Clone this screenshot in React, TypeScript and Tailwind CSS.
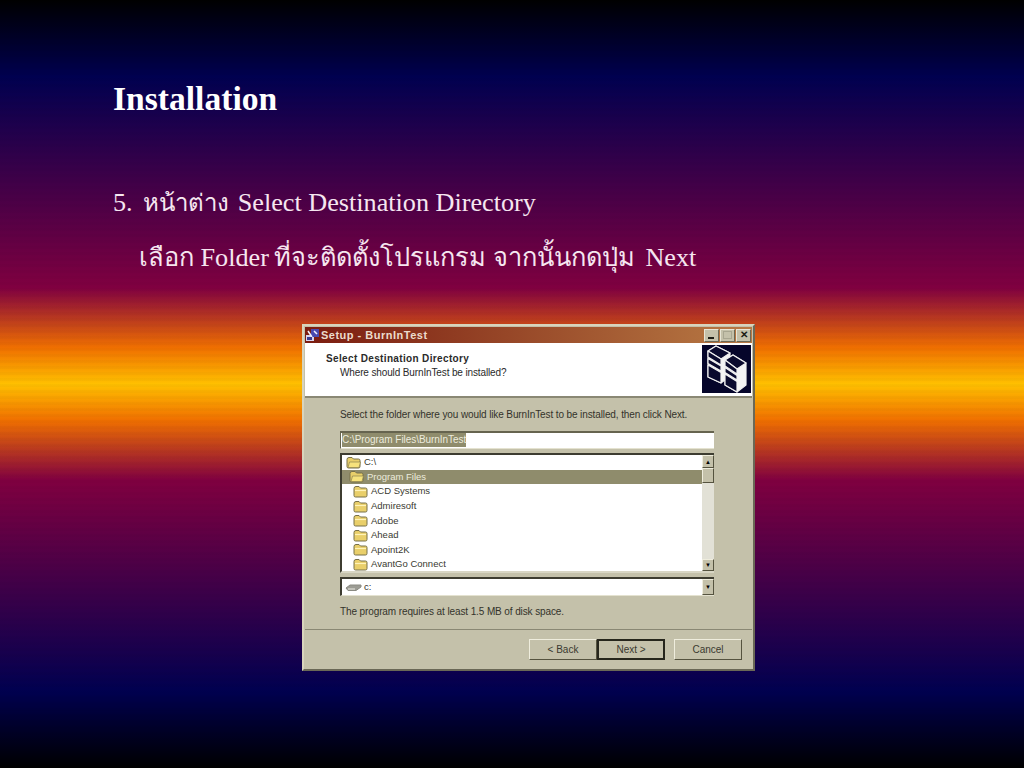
import React from "react";

const FolderIcon = ({ open }: { open?: boolean }) => (
  <svg width="15" height="13" viewBox="0 0 15 13" className="shrink-0">
    <path d="M1 3.500 Q1 1.500 3 1.500 H6 L7.500 3 H12.500 Q14 3 14 4.500 V10.500 Q14 12 12.500 12 H2.500 Q1 12 1 10.500 Z" fill="#e9cf6a" stroke="#77704a" strokeWidth="1" />
    {open ? (
      <path d="M2 11.500 L3.500 6 H14.500 L13 11.500 Z" fill="#f6e27c" stroke="#8a8150" strokeWidth="0.700" />
    ) : (
      <path d="M2 5.500 H13" stroke="#fff3b8" strokeWidth="1.200" />
    )}
  </svg>
);

const ServerIcon = () => (
  <svg width="49" height="48" viewBox="0 0 49 48" className="block">
    <rect width="49" height="48" fill="#05052a" />
    <g stroke="#f0f0f0" strokeWidth="1.200" strokeLinejoin="round" fill="#0a0a2e">
      <path d="M6 6 L14 1 L28 8 L28 31 L19 38 L6 32 Z" fill="#f4f4f4" />
      <path d="M6 6 L14 1 L28 8 L19 14 Z" />
      <path d="M6 6 L19 14 V20 L6 12 Z" />
      <path d="M6 13.500 L19 21 V26 L6 18.500 Z" />
      <path d="M6 20 L19 27.500 V38 L6 32 Z" />
      <path d="M23 15 L31 10 L44 18 L44 40 L35 47 L23 40 Z" fill="#f4f4f4" />
      <path d="M23 15 L31 10 L44 18 L35 24 Z" />
      <path d="M23 15 L35 24 V29 L23 21 Z" />
      <path d="M23 22.500 L35 30.500 V35 L23 27.500 Z" />
      <path d="M23 29 L35 36.500 V47 L23 40 Z" />
    </g>
  </svg>
);

const DriveIcon = () => (
  <svg width="17" height="9" viewBox="0 0 17 9" className="shrink-0">
    <path d="M1 5 L5 2 H16 V4 L11 7.500 H3 Z" fill="#9c9c94" stroke="#8a8a82" strokeWidth="1" />
    <path d="M3 6 H10" stroke="#ecece4" strokeWidth="1" />
  </svg>
);

const WinButton = ({ children }: { children: React.ReactNode }) => (
  <div className="flex items-center justify-center h-[13px] w-[15px] bg-[#c4c1aa] border border-t-[#e8e6d6] border-l-[#e8e6d6] border-r-[#6a6856] border-b-[#6a6856]">
    {children}
  </div>
);

const Button = ({ label, primary }: { label: string; primary?: boolean }) => (
  <div
    className={`flex items-center justify-center w-[68px] h-[21px] bg-[#c4c1aa] text-[10px] text-[#3a3a30] ${
      primary
        ? "border-2 border-[#26261c]"
        : "border border-t-[#efeddd] border-l-[#efeddd] border-r-[#55533f] border-b-[#55533f]"
    }`}
  >
    {label}
  </div>
);

const folders = ["ACD Systems", "Admiresoft", "Adobe", "Ahead", "Apoint2K", "AvantGo Connect"];

const TreeRow = ({ label, indent, open, selected }: { label: string; indent: string; open?: boolean; selected?: boolean }) => (
  <div className={`flex items-center gap-[3px] h-[14.600px] text-[9.500px] ${indent} ${selected ? "bg-[#8f8c6c] text-[#ecebdc]" : "text-[#3a3a30]"}`}>
    <FolderIcon open={open} />
    <span>{label}</span>
  </div>
);

export default function App() {
  return (
    <div
      className="w-[1024px] h-[768px] overflow-hidden text-white bg-[repeating-linear-gradient(180deg,rgba(0,0,0,0.02)_0px,rgba(0,0,0,0.02)_3px,transparent_3px,transparent_6px),linear-gradient(180deg,#000000_0px,#000050_77px,#800040_288px,#f07000_348px,#ffc000_384px,#f07000_420px,#800040_480px,#000050_691px,#000000_768px)]"
      style={{ fontFamily: '"Liberation Serif", "Noto Sans", serif' }}
    >
      <div className="pl-[113px] pt-[80px]">
        <h1 className="text-[33.600px] leading-[38px] font-bold">Installation</h1>
        <p className="mt-[65px] text-[26.200px] leading-[40px] text-[#f6e6f0]">
          5. <span className="ml-[4px] mr-[2px] text-[24px]">หน้าต่าง</span> Select Destination Directory
        </p>
        <p className="mt-[14px] ml-[26px] text-[26.200px] leading-[40px] text-[#f6e6f0]">
          <span className="text-[25.400px]">เลือก</span> Folder <span className="-ml-[1px] mr-[4px] text-[25.400px]">ที่จะติดตั้งโปรแกรม จากนั้นกดปุ่ม</span> Next
        </p>
      </div>

      <div
        className="ml-[302px] mt-[46px] w-[453px] h-[347px] flex flex-col border-[2px] border-t-[#d8d4bc] border-l-[#d8d4bc] border-r-[#6a6856] border-b-[#6a6856] bg-[#c4c1aa] p-px text-[10px]"
        style={{ fontFamily: '"Liberation Sans", Arial, sans-serif' }}
      >
        <div className="flex items-center justify-between h-[16px] pr-[1px] bg-[linear-gradient(90deg,#7b1c10,#b87a44)]">
          <div className="flex items-center gap-[1px]">
            <svg width="15" height="14" viewBox="0 0 15 14">
              <rect x="1" y="7" width="8" height="6" fill="#d8d4ee" />
              <rect x="6" y="1" width="8" height="8" fill="#4a4ab0" />
              <path d="M3 3 L7 9 M9 3 L12 6" stroke="#f4f4ff" strokeWidth="1.500" />
              <rect x="2" y="9" width="5" height="3" fill="#3a3a90" />
            </svg>
            <span className="text-[11px] leading-none font-bold tracking-[0.500px] text-[#ecdccc]">Setup - BurnInTest</span>
          </div>
          <div className="flex items-center gap-[1px]">
            <WinButton>
              <div className="w-[6px] h-[2px] bg-[#1c1c14] mt-[6px] mr-[2px]" />
            </WinButton>
            <WinButton>
              <div className="w-[9px] h-[8px] border border-[#a8a690]" />
            </WinButton>
            <WinButton>
              <span className="text-[10px] leading-none font-bold text-[#1c1c14]">✕</span>
            </WinButton>
          </div>
        </div>

        <div className="flex justify-between h-[55px] bg-white border-b-2 border-b-[#8a8874] pr-[1px] pt-[2px]">
          <div className="pl-[21px] pt-[7px] text-[#2a2a2a]">
            <div className="font-bold leading-[14px] tracking-[0.350px]">Select Destination Directory</div>
            <div className="pl-[14px] leading-[14px] tracking-[-0.130px]">Where should BurnInTest be installed?</div>
          </div>
          <ServerIcon />
        </div>

        <div className="flex flex-col flex-1 pl-[35px] pr-[38px] text-[#33332a]">
          <div className="mt-[10px] leading-[14px] tracking-[-0.110px]">Select the folder where you would like BurnInTest to be installed, then click Next.</div>

          <div className="mt-[9px] h-[18px] bg-white border-t-2 border-l border-t-[#66644f] border-l-[#66644f] border-b border-b-[#e4e2d0] pl-[1px]">
            <span className="block w-fit h-[14px] leading-[13px] bg-[#8f8c6c] text-[#ecebdc] tracking-[-0.050px]">C:\Program Files\BurnInTest</span>
          </div>

          <div className="mt-[4px] h-[120px] flex bg-white border-t-2 border-l-2 border-t-[#3d3c30] border-l-[#3d3c30] border-b-2 border-b-[#d8d6c4]">
            <div className="flex-1 min-w-0">
              <TreeRow label="C:\" indent="pl-[4px]" open />
              <TreeRow label="Program Files" indent="pl-[7px]" open selected />
              {folders.map((name) => (
                <TreeRow key={name} label={name} indent="pl-[11px]" />
              ))}
            </div>
            <div className="w-[12px] flex flex-col justify-between bg-[#e2e1d6]">
              <div>
                <div className="flex items-center justify-center h-[13px] bg-[#c4c1aa] border border-t-[#efeddd] border-l-[#efeddd] border-r-[#55533f] border-b-[#55533f] text-[6px] leading-none text-black">▲</div>
                <div className="h-[15px] bg-[#c4c1aa] border border-t-[#efeddd] border-l-[#efeddd] border-r-[#55533f] border-b-[#55533f]" />
              </div>
              <div className="flex items-center justify-center h-[12px] bg-[#c4c1aa] border border-t-[#efeddd] border-l-[#efeddd] border-r-[#55533f] border-b-[#55533f] text-[6px] leading-none text-black">▼</div>
            </div>
          </div>

          <div className="mt-[4px] h-[19px] flex bg-white border-t-2 border-l-2 border-t-[#3d3c30] border-l-[#3d3c30] border-b border-b-[#e4e2d0]">
            <div className="flex-1 flex items-center gap-[2px] pl-[3px]">
              <DriveIcon />
              <span className="text-[9.500px]">c:</span>
            </div>
            <div className="flex items-center justify-center w-[12px] bg-[#c4c1aa] border border-t-[#efeddd] border-l-[#efeddd] border-r-[#55533f] border-b-[#55533f] text-[6px] leading-none text-black">▼</div>
          </div>

          <div className="mt-[9px] leading-[14px] tracking-[-0.110px]">The program requires at least 1.5 MB of disk space.</div>
        </div>

        <div className="h-[39px] border-t border-t-[#8a8874] flex items-start justify-end pt-[9px] pr-[10px]">
          <Button label="< Back" />
          <Button label="Next >" primary />
          <div className="ml-[9px]">
            <Button label="Cancel" />
          </div>
        </div>
      </div>
    </div>
  );
}
